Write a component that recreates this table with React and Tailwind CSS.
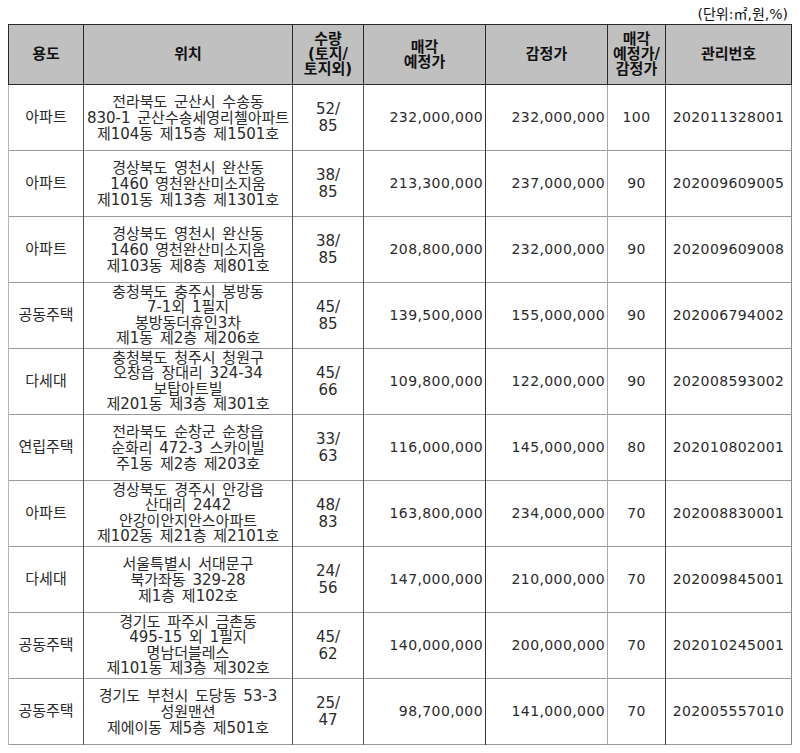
import React from "react";

const rows = [
  {
    use: "아파트",
    addr: ["전라북도 군산시 수송동", "830-1 군산수송세영리첼아파트", "제104동 제15층 제1501호"],
    qty: ["52/", "85"],
    sale: "232,000,000",
    appr: "232,000,000",
    ratio: "100",
    no: "202011328001",
  },
  {
    use: "아파트",
    addr: ["경상북도 영천시 완산동", "1460 영천완산미소지움", "제101동 제13층 제1301호"],
    qty: ["38/", "85"],
    sale: "213,300,000",
    appr: "237,000,000",
    ratio: "90",
    no: "202009609005",
  },
  {
    use: "아파트",
    addr: ["경상북도 영천시 완산동", "1460 영천완산미소지움", "제103동 제8층 제801호"],
    qty: ["38/", "85"],
    sale: "208,800,000",
    appr: "232,000,000",
    ratio: "90",
    no: "202009609008",
  },
  {
    use: "공동주택",
    addr: ["충청북도 충주시 봉방동", "7-1외 1필지", "봉방동더휴인3차", "제1동 제2층 제206호"],
    qty: ["45/", "85"],
    sale: "139,500,000",
    appr: "155,000,000",
    ratio: "90",
    no: "202006794002",
  },
  {
    use: "다세대",
    addr: ["충청북도 청주시 청원구", "오창읍 장대리 324-34", "보탑아트빌", "제201동 제3층 제301호"],
    qty: ["45/", "66"],
    sale: "109,800,000",
    appr: "122,000,000",
    ratio: "90",
    no: "202008593002",
  },
  {
    use: "연립주택",
    addr: ["전라북도 순창군 순창읍", "순화리 472-3 스카이빌", "주1동 제2층 제203호"],
    qty: ["33/", "63"],
    sale: "116,000,000",
    appr: "145,000,000",
    ratio: "80",
    no: "202010802001",
  },
  {
    use: "아파트",
    addr: ["경상북도 경주시 안강읍", "산대리 2442", "안강이안지안스아파트", "제102동 제21층 제2101호"],
    qty: ["48/", "83"],
    sale: "163,800,000",
    appr: "234,000,000",
    ratio: "70",
    no: "202008830001",
  },
  {
    use: "다세대",
    addr: ["서울특별시 서대문구", "북가좌동 329-28", "제1층 제102호"],
    qty: ["24/", "56"],
    sale: "147,000,000",
    appr: "210,000,000",
    ratio: "70",
    no: "202009845001",
  },
  {
    use: "공동주택",
    addr: ["경기도 파주시 금촌동", "495-15 외 1필지", "명남더블레스", "제101동 제3층 제302호"],
    qty: ["45/", "62"],
    sale: "140,000,000",
    appr: "200,000,000",
    ratio: "70",
    no: "202010245001",
  },
  {
    use: "공동주택",
    addr: ["경기도 부천시 도당동 53-3", "성원맨션", "제에이동 제5층 제501호"],
    qty: ["25/", "47"],
    sale: "98,700,000",
    appr: "141,000,000",
    ratio: "70",
    no: "202005557010",
  },
];

const font = "font-['DejaVu_Sans','Noto_Sans_CJK_KR',sans-serif]";

export default function App() {
  return (
    <div className={`w-[800px] h-[753px] bg-white text-[#2b2b2b] ${font}`}>
      <div className="h-[24px] pr-[12px] flex justify-end items-center text-[14px] leading-none pt-[4px] text-[#111]">
        (단위:㎡,원,%)
      </div>
      <table className="ml-[8px] w-[783px] table-fixed border-collapse">
        <colgroup>
          <col className="w-[75px]" />
          <col className="w-[209px]" />
          <col className="w-[71px]" />
          <col className="w-[122px]" />
          <col className="w-[122px]" />
          <col className="w-[58px]" />
          <col className="w-[126px]" />
        </colgroup>
        <thead>
          <tr className="h-[60px] bg-[#c0c0c0] text-[15px] font-bold leading-[15px] text-center text-[#111]">
            <th className="border border-[#2a2a2a]">용도</th>
            <th className="border border-[#2a2a2a]">위치</th>
            <th className="border border-[#2a2a2a]">
              수량
              <br />
              (토지/
              <br />
              토지외)
            </th>
            <th className="border border-[#2a2a2a]">
              매각
              <br />
              예정가
            </th>
            <th className="border border-[#2a2a2a]">감정가</th>
            <th className="border border-[#2a2a2a]">
              매각
              <br />
              예정가/
              <br />
              감정가
            </th>
            <th className="border border-[#2a2a2a]">관리번호</th>
          </tr>
        </thead>
        <tbody className="text-[15px]">
          {rows.map((r, i) => (
            <tr key={i} className="h-[66px] border-b border-[#9a9a9a]">
              <td className="border-l border-l-[#b5b5b5] border-r border-r-[#555] text-center">{r.use}</td>
              <td
                className={`border-r border-r-[#555] text-center [word-spacing:2px] ${
                  r.addr.length > 3 ? "leading-[15.5px]" : "leading-[16px]"
                }`}
              >
                {r.addr.map((line, j) => (
                  <div key={j} className="whitespace-nowrap">
                    {line}
                  </div>
                ))}
              </td>
              <td className="border-r border-r-[#555] text-center leading-[17px]">
                <div>{r.qty[0]}</div>
                <div>{r.qty[1]}</div>
              </td>
              <td className="border-r border-r-[#333] text-right pr-[2px] text-[14px] tracking-[0.4px]">{r.sale}</td>
              <td className="border-r border-r-[#a8a8a8] text-right pr-[2px] text-[14px] tracking-[0.4px]">{r.appr}</td>
              <td className="border-r border-r-[#444] text-center text-[14px] tracking-[0.4px]">{r.ratio}</td>
              <td className="border-r border-r-[#8a8a8a] text-center text-[14px] tracking-[0.4px]">{r.no}</td>
            </tr>
          ))}
        </tbody>
      </table>
    </div>
  );
}
